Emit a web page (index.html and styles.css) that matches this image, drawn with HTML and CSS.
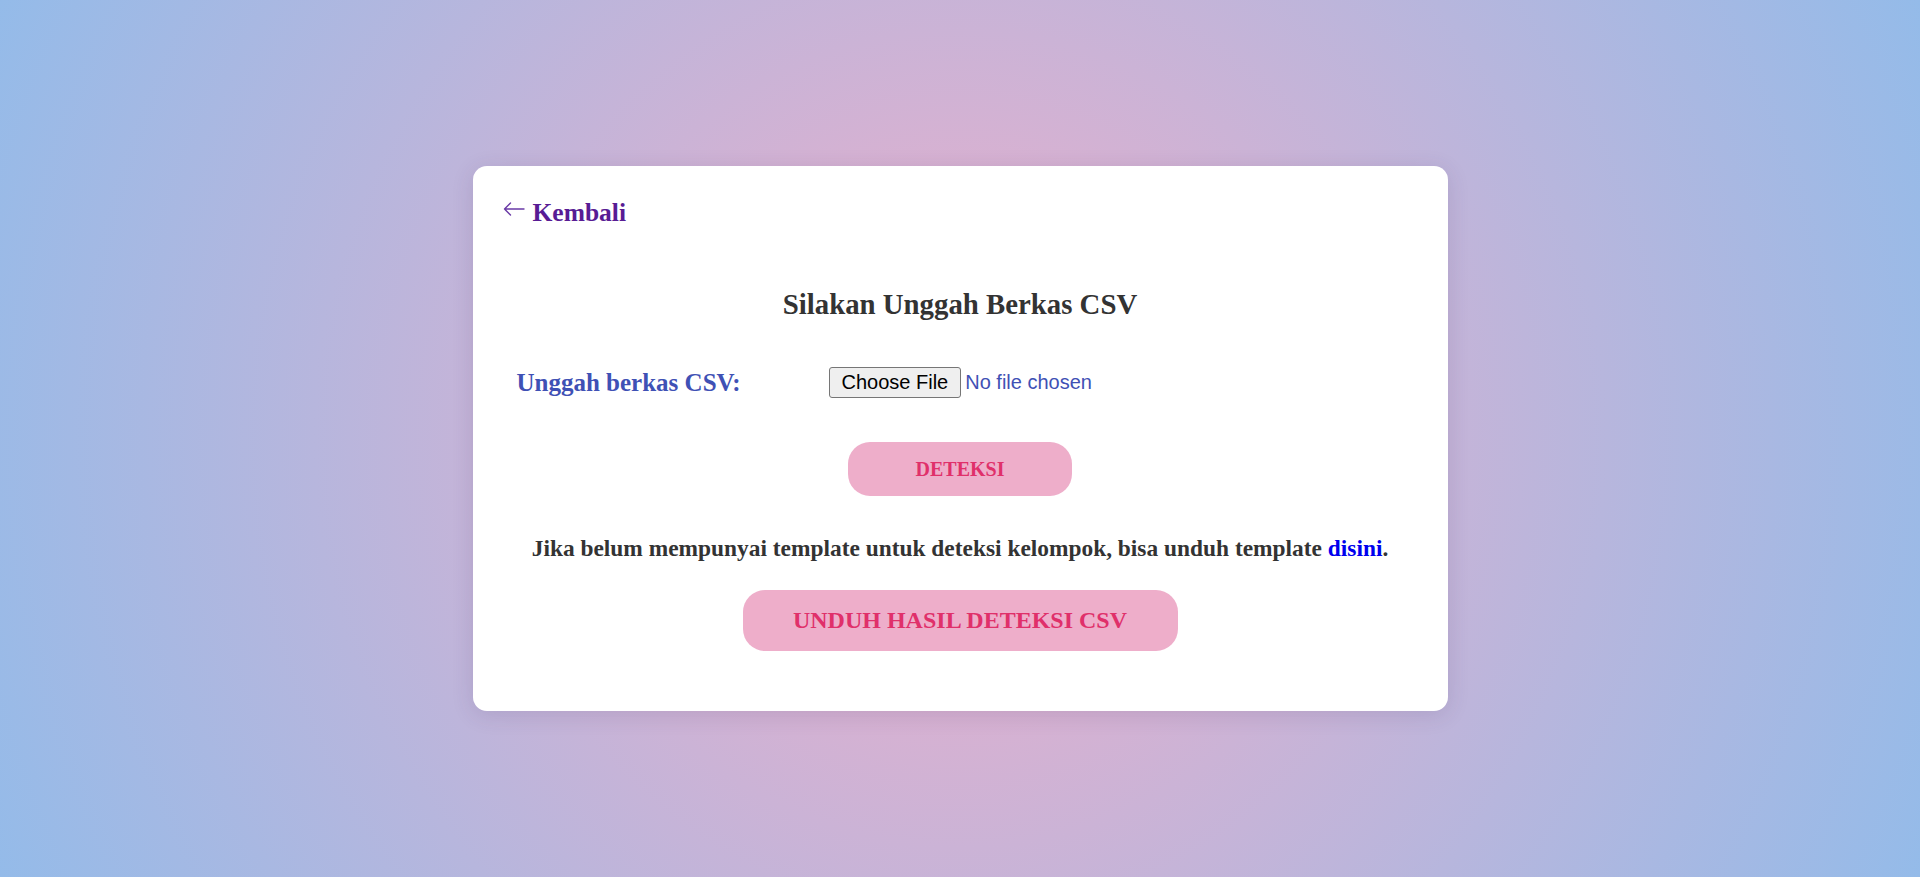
FILE: index.html
```html
<!DOCTYPE html>
<html lang="id">
<head>
<meta charset="utf-8">
<title>Unggah Berkas CSV</title>
<link rel="stylesheet" href="styles.css">
</head>
<body>
  <main class="card">
    <a class="back" href="#">
      <svg class="back-icon" width="22" height="14" viewBox="0 0 22 14" aria-hidden="true">
        <path d="M21 7H1.5M7.5 1L1.5 7l6 6" fill="none" stroke="currentColor" stroke-width="1.4" stroke-linecap="round" stroke-linejoin="round"/>
      </svg>
      <span>Kembali</span>
    </a>
    <h2 class="title">Silakan Unggah Berkas CSV</h2>
    <form class="upload">
      <div class="field">
        <label class="field-label" for="csv">Unggah berkas CSV:</label>
        <input class="file" id="csv" type="file" accept=".csv">
      </div>
      <button class="btn btn-detect" type="button">DETEKSI</button>
    </form>
    <p class="note">Jika belum mempunyai template untuk deteksi kelompok, bisa unduh template <a href="#">disini</a>.</p>
    <button class="btn btn-download" type="button">UNDUH HASIL DETEKSI CSV</button>
  </main>
</body>
</html>
```

FILE: styles.css
```css
html, body {
  margin: 0;
  height: 100%;
}

body {
  min-height: 100vh;
  display: flex;
  align-items: center;
  justify-content: center;
  background: radial-gradient(circle, #eeaeca 0%, #94bbe9 100%);
  font-family: "Liberation Serif", "Times New Roman", serif;
  color: #333;
}

.card {
  width: 975px;
  box-sizing: border-box;
  padding: 32px 32px 60px;
  background: #fff;
  border-radius: 14px;
  box-shadow: 0 4px 22px rgba(60, 40, 90, 0.14);
  display: flex;
  flex-direction: column;
  align-items: center;
}

.back {
  align-self: flex-start;
  display: inline-flex;
  align-items: center;
  gap: 8px;
  margin-left: -2px;
  color: #581c94;
  text-decoration: none;
  font-weight: 700;
  font-size: 25.5px;
  line-height: 29px;
}

.back-icon {
  color: #6a3aa6;
  margin-bottom: 8px;
}

.title {
  margin: 61px 0 0;
  font-size: 28.8px;
  line-height: 33px;
  font-weight: 700;
  color: #333;
  text-align: center;
}

.upload {
  align-self: stretch;
  display: flex;
  flex-direction: column;
  align-items: center;
}

.field {
  align-self: stretch;
  display: flex;
  align-items: center;
  margin-top: 46px;
  padding-left: 12px;
}

.field-label {
  flex: 0 0 312px;
  font-size: 25px;
  line-height: 29px;
  font-weight: 700;
  color: #3f51b5;
}

.file {
  font-family: "Liberation Sans", Arial, sans-serif;
  font-size: 20px;
  color: #3f51b5;
}

.file::file-selector-button {
  font: inherit;
  color: #000;
  background: #efefef;
  border: 1px solid #767676;
  border-radius: 3px;
  padding: 3px 12px;
  margin-right: 4px;
}

.btn {
  display: flex;
  align-items: center;
  justify-content: center;
  border: none;
  background: #eeaeca;
  color: #e0306a;
  font-family: "Liberation Serif", "Times New Roman", serif;
  font-weight: 700;
  cursor: pointer;
}

.btn-detect {
  width: 224px;
  height: 54px;
  margin-top: 44px;
  border-radius: 22px;
  font-size: 20px;
}

.note {
  margin: 39px 0 0;
  font-size: 23.4px;
  line-height: 27px;
  font-weight: 700;
  color: #333;
  text-align: center;
}

.note a {
  color: #0000ee;
  text-decoration: none;
}

.btn-download {
  width: 435px;
  height: 61px;
  margin-top: 28px;
  border-radius: 22px;
  font-size: 24px;
}
```
